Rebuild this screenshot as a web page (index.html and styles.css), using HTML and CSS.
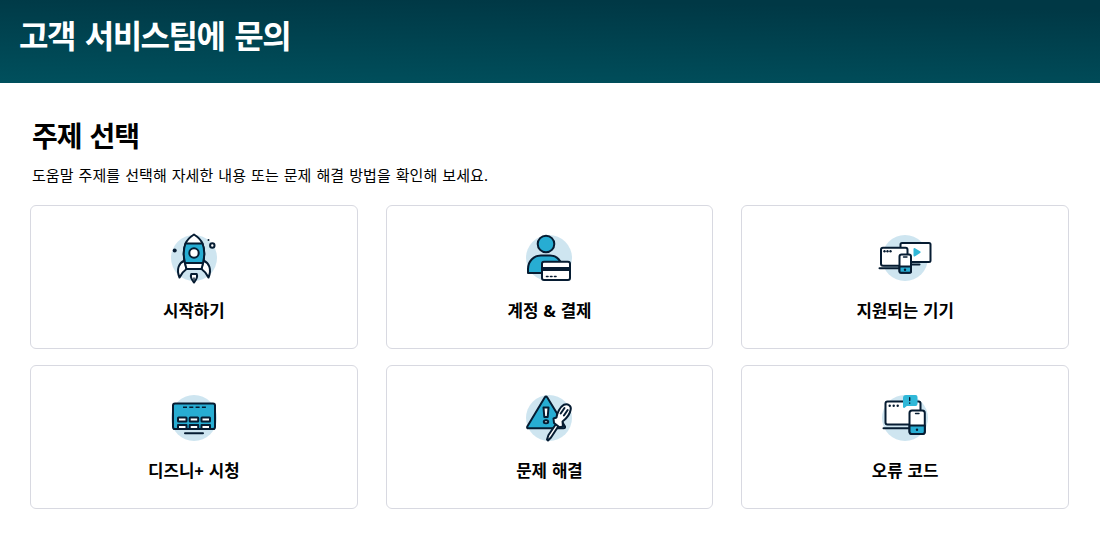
FILE: index.html
```html
<!DOCTYPE html>
<html lang="ko">
<head>
    <meta charset="UTF-8">
    <meta name="viewport" content="width=device-width, initial-scale=1.0">
    <title>고객 서비스팀에 문의</title>
    <link rel="stylesheet" href="styles.css">
</head>
<body>

    <header class="header">
        <h1>고객 서비스팀에 문의</h1>
    </header>

    <main class="topics">
        <h2>주제 선택</h2>
        <p class="intro">도움말 주제를 선택해 자세한 내용 또는 문제 해결 방법을 확인해 보세요.</p>

        <div class="grid">
            <a class="card">
                <!-- rocket -->
                <svg class="icon" viewBox="0 0 60 60">
                    <circle class="halo" cx="30" cy="30" r="23"/>
                    <path class="white" d="M20.500 32.500C15 35 12 41 15.500 49.500C17 46 19 43.500 22.500 41ZM39.500 32.500C45 35 48 41 44.500 49.500C43 46 41 43.500 37.500 41Z"/>
                    <path class="white" d="M30 6.500C26 9 23 12 21.500 15.500C19 22 19.500 32 22.500 41H37.500C40.500 32 41 22 38.500 15.500C37 12 34 9 30 6.500Z"/>
                    <path class="blue" d="M21.500 15.500H38.500C41 22 40.500 29 39 35H21C19.500 29 19 22 21.500 15.500Z"/>
                    <circle class="white" cx="30" cy="25" r="4.700"/>
                    <path class="white" d="M27.300 46H32.700C34 49 32.500 51.500 30 54.500C27.500 51.500 26 49 27.300 46Z"/>
                    <path class="line thin" d="M30 50V52"/>
                    <circle class="dark" cx="10.700" cy="22.500" r="2"/>
                    <circle class="dark" cx="44.500" cy="12" r="1"/>
                    <circle class="white" cx="48.300" cy="17.500" r="2.200"/>
                </svg>
                <span class="label">시작하기</span>
            </a>
            <a class="card">
                <!-- person with a card -->
                <svg class="icon" viewBox="0 0 60 60">
                    <circle class="halo" cx="29" cy="30" r="23"/>
                    <path class="blue" d="M8 45V41C8 33 14 27.500 21 27.500H30C37 27.500 42 33 42 41V45Z"/>
                    <circle class="blue" cx="26" cy="16" r="8.300"/>
                    <rect class="white" x="22" y="33.700" width="28" height="18.300" rx="2"/>
                    <path class="dark" d="M22 39H50V43H22Z"/>
                    <path class="line dots" d="M26.500 48.500H38.500"/>
                </svg>
                <span class="label">계정 &amp; 결제</span>
            </a>
            <a class="card">
                <!-- laptop, tv and phone -->
                <svg class="icon" viewBox="0 0 60 60">
                    <circle class="halo" cx="30" cy="30" r="23"/>
                    <rect class="white" x="25.500" y="15" width="30" height="19" rx="1.500"/>
                    <path class="accent" d="M39.500 21L44.500 24.200L39.500 27.500Z"/>
                    <rect class="white" x="6" y="19.700" width="26.500" height="18" rx="2"/>
                    <path class="line" d="M4.500 40.300H25M37 36.500H44.500"/>
                    <circle class="dark" cx="9.500" cy="23.300" r="1.200"/>
                    <circle class="dark" cx="12.500" cy="23.300" r="1.200"/>
                    <circle class="dark" cx="15.500" cy="23.300" r="1.200"/>
                    <rect class="white" x="24.500" y="26.500" width="11.500" height="18.300" rx="2"/>
                    <path class="blue" d="M24.500 38.500H36V43.300Q36 44.800 34.500 44.800H26Q24.500 44.800 24.500 43.300Z"/>
                    <path class="line thin" d="M28.500 29H32"/>
                    <circle class="dark" cx="30" cy="41.700" r="1.200"/>
                </svg>
                <span class="label">지원되는 기기</span>
            </a>
            <a class="card">
                <!-- tv guide -->
                <svg class="icon" viewBox="0 0 60 60">
                    <circle class="halo" cx="30" cy="30" r="23"/>
                    <rect class="blue" x="9" y="15.500" width="42" height="25.500" rx="2"/>
                    <path class="line dashes" d="M19 19.300H42"/>
                    <rect class="white" x="14" y="29.500" width="8.500" height="4" rx=".5"/>
                    <rect class="white" x="25.700" y="29.500" width="8.500" height="4" rx=".5"/>
                    <rect class="white" x="37.500" y="29.500" width="8.500" height="4" rx=".5"/>
                    <path class="white" d="M14 41V37H22.500V41M25.700 41V37H34.200V41M37.500 41V37H46V41"/>
                    <path class="line" d="M10 41H50M21 45.300H39"/>
                </svg>
                <span class="label">디즈니+ 시청</span>
            </a>
            <a class="card">
                <!-- warning sign and screwdriver -->
                <svg class="icon" viewBox="0 0 60 60">
                    <circle class="halo" cx="29" cy="30" r="23"/>
                    <path class="blue" d="M24.700 9.500Q26 7.500 27.300 9.500L45 38.500Q45.500 40.300 43.500 40.300H8.500Q6.500 40.300 7.300 38.500Z"/>
                    <path class="white" d="M23.500 19.500H28.500L27.700 29H24.300Z"/>
                    <ellipse class="white" cx="26" cy="33.700" rx="2.200" ry="1.500"/>
                    <path class="white" d="M36 36L38.500 38L31 49.500L28 52.500L27 51.500L28.500 47Z"/>
                    <path class="white" d="M36.500 29.500C37 25 40 19 44 16.700C48 15.200 51.500 18 50.700 21.500C50 26 46.500 30.500 42.500 33.500L43 38.500L39.500 39.300L34 35L33.500 30.500Z"/>
                    <path class="line" d="M40.700 25.500L44.500 20M43.900 27.500L47.700 22"/>
                </svg>
                <span class="label">문제 해결</span>
            </a>
            <a class="card">
                <!-- laptop and phone with an alert -->
                <svg class="icon" viewBox="0 0 60 60">
                    <circle class="halo" cx="30" cy="30" r="23"/>
                    <rect class="white" x="10.500" y="13.500" width="35" height="23" rx="2"/>
                    <path class="line" d="M8.500 40.300H34"/>
                    <circle class="dark" cx="14.700" cy="17.700" r="1.200"/>
                    <circle class="dark" cx="18.700" cy="17.700" r="1.200"/>
                    <circle class="dark" cx="22.700" cy="17.700" r="1.200"/>
                    <path class="accent" d="M31 8H40.500Q41.500 8 41.500 9V16Q41.500 17 40.500 17H31.500L29 19V10Q29 8 31 8Z"/>
                    <path class="line thin" d="M34.700 9.800V12.500M34.700 15V15.300"/>
                    <rect class="white" x="34.500" y="22.500" width="15.300" height="23.500" rx="2.500"/>
                    <path class="blue" d="M34.500 37.500H49.800V43.500Q49.800 46 47.300 46H37Q34.500 46 34.500 43.500Z"/>
                    <path class="line thin" d="M40.500 25.500H44"/>
                    <circle class="dark" cx="42" cy="41.700" r="1.200"/>
                </svg>
                <span class="label">오류 코드</span>
            </a>
        </div>
    </main>

</body>
</html>
```

FILE: styles.css
```css
body {
    font-family: "Noto Sans", "Noto Sans CJK KR", sans-serif;
    background-color: #fff;
    color: #000;
    margin: 0;
}
.header {
    box-sizing: border-box;
    height: 83px;
    padding: 14px 19px;
    background: linear-gradient(181deg, #003845 10%, #00505d);
}
h1, h2, p {
    margin: 0;
}
.header h1 {
    color: #fff;
    font-size: 32px;
    line-height: 44px;
    letter-spacing: -1.5px;
    word-spacing: 3px;
}
.topics {
    padding: 33px 31px 0 30px;
}
.topics h2 {
    padding-left: 2px;
    font-size: 28px;
    line-height: 40px;
    letter-spacing: -1.1px;
    word-spacing: 2px;
}
.intro {
    margin: 8px 0 19px;
    padding-left: 2px;
    font-size: 15px;
    line-height: 22px;
    letter-spacing: 0.07px;
    word-spacing: 1px;
}
.grid {
    display: grid;
    grid-template-columns: repeat(3, 1fr);
    gap: 16px 28px;
}
.card {
    box-sizing: border-box;
    height: 144px;
    padding-top: 22px;
    border: 1px solid #d8d9e1;
    border-radius: 6px;
    display: flex;
    flex-direction: column;
    align-items: center;
}
.icon {
    width: 60px;
    height: 60px;
}
.card:nth-child(3n+2) .icon {
    margin-left: 1px;
}
.label {
    margin-top: 11px;
    font-size: 16.8px;
    font-weight: bold;
    line-height: 24px;
    word-spacing: 0.5px;
}

/* icon parts */
.halo {
    fill: #cee5f0;
}
.white, .blue, .line {
    stroke: #061c32;
    stroke-width: 2;
    stroke-linejoin: round;
    stroke-linecap: round;
}
.white {
    fill: #fff;
}
.blue {
    fill: #27add3;
}
.accent {
    fill: #30b8d8;
    stroke: #30b8d8;
    stroke-width: 2;
    stroke-linejoin: round;
}
.dark {
    fill: #061c32;
}
.line {
    fill: none;
}
.thin {
    stroke-width: 1.4;
}
.dots {
    stroke-width: 1.6;
    stroke-dasharray: 1.500 2.500;
}
.dashes {
    stroke-width: 1.6;
    stroke-linecap: butt;
    stroke-dasharray: 4 2.300;
}
```
